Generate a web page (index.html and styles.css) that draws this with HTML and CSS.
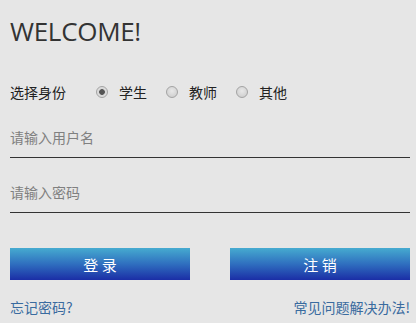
FILE: index.html
```html
<!DOCTYPE html>
<html lang="zh-CN">
<head>
<meta charset="utf-8">
<title>Login</title>
<link rel="stylesheet" href="styles.css">
</head>
<body>
<div class="login">
  <h1 class="title">WELCOME!</h1>
  <div class="role-row">
    <span class="role-label">选择身份</span>
    <label class="opt"><input type="radio" name="role" class="radio" checked><span>学生</span></label>
    <label class="opt"><input type="radio" name="role" class="radio"><span>教师</span></label>
    <label class="opt"><input type="radio" name="role" class="radio"><span>其他</span></label>
  </div>
  <input class="field" type="text" placeholder="请输入用户名">
  <input class="field field-pass" type="password" placeholder="请输入密码">
  <div class="btn-row">
    <button class="btn">登 录</button>
    <button class="btn">注 销</button>
  </div>
  <div class="link-row">
    <a class="link" href="#">忘记密码?</a>
    <a class="link" href="#">常见问题解决办法!</a>
  </div>
</div>
</body>
</html>
```
FILE: styles.css
```css
html, body {
  margin: 0;
  padding: 0;
  background: #e6e6e6;
}
body {
  font-family: "Open Sans", "Noto Sans CJK SC", sans-serif;
  color: #222;
}
.login {
  width: 400px;
  margin-left: 10px;
  display: flex;
  flex-direction: column;
}
.title {
  margin: 16px 0 0 0;
  font-size: 26px;
  line-height: 30px;
  font-weight: 400;
  color: #333;
  letter-spacing: -0.3px;
}
.role-row {
  margin-top: 36px;
  height: 20px;
  display: flex;
  align-items: center;
  font-size: 14px;
  font-family: "Noto Sans CJK SC", sans-serif;
  color: #222;
}
.role-label {
  margin-right: 30px;
}
.opt {
  display: flex;
  align-items: center;
  margin-right: 19px;
}
.radio {
  appearance: none;
  -webkit-appearance: none;
  margin: 0 11px 0 0;
  width: 12px;
  height: 12px;
  border-radius: 50%;
  border: 1px solid #a3a3a3;
  background: radial-gradient(circle at 50% 40%, #e8e8e8 0%, #c9c9c9 100%);
  box-sizing: border-box;
  position: relative;
}
.radio:checked {
  background: radial-gradient(circle, #555 0, #555 2.5px, #d8d8d8 3.2px, #e4e4e4 100%);
}
.field {
  display: block;
  margin: 25px 0 0 0;
  width: 400px;
  box-sizing: border-box;
  height: 31px;
  padding: 0 0 10px 0;
  border: none;
  border-bottom: 1px solid #333;
  background: transparent;
  font-size: 14px;
  font-family: "Noto Sans CJK SC", sans-serif;
  color: #222;
  outline: none;
}
.field::placeholder {
  color: #808080;
}
.field-pass {
  margin-top: 24px;
}
.btn-row {
  margin-top: 35px;
  display: flex;
  justify-content: space-between;
}
.btn {
  width: 180px;
  height: 32px;
  border: none;
  padding: 0;
  background: linear-gradient(to bottom, #46abd0 0%, #2f6fbf 50%, #1b2ea6 100%);
  color: #fff;
  font-size: 15px;
  font-family: "Noto Sans CJK SC", sans-serif;
  cursor: pointer;
}
.link-row {
  margin-top: 17px;
  display: flex;
  justify-content: space-between;
  font-size: 14px;
  line-height: 20px;
}
.link {
  color: #3a6b9f;
  text-decoration: none;
  font-family: "Noto Sans CJK SC", sans-serif;
}
```
